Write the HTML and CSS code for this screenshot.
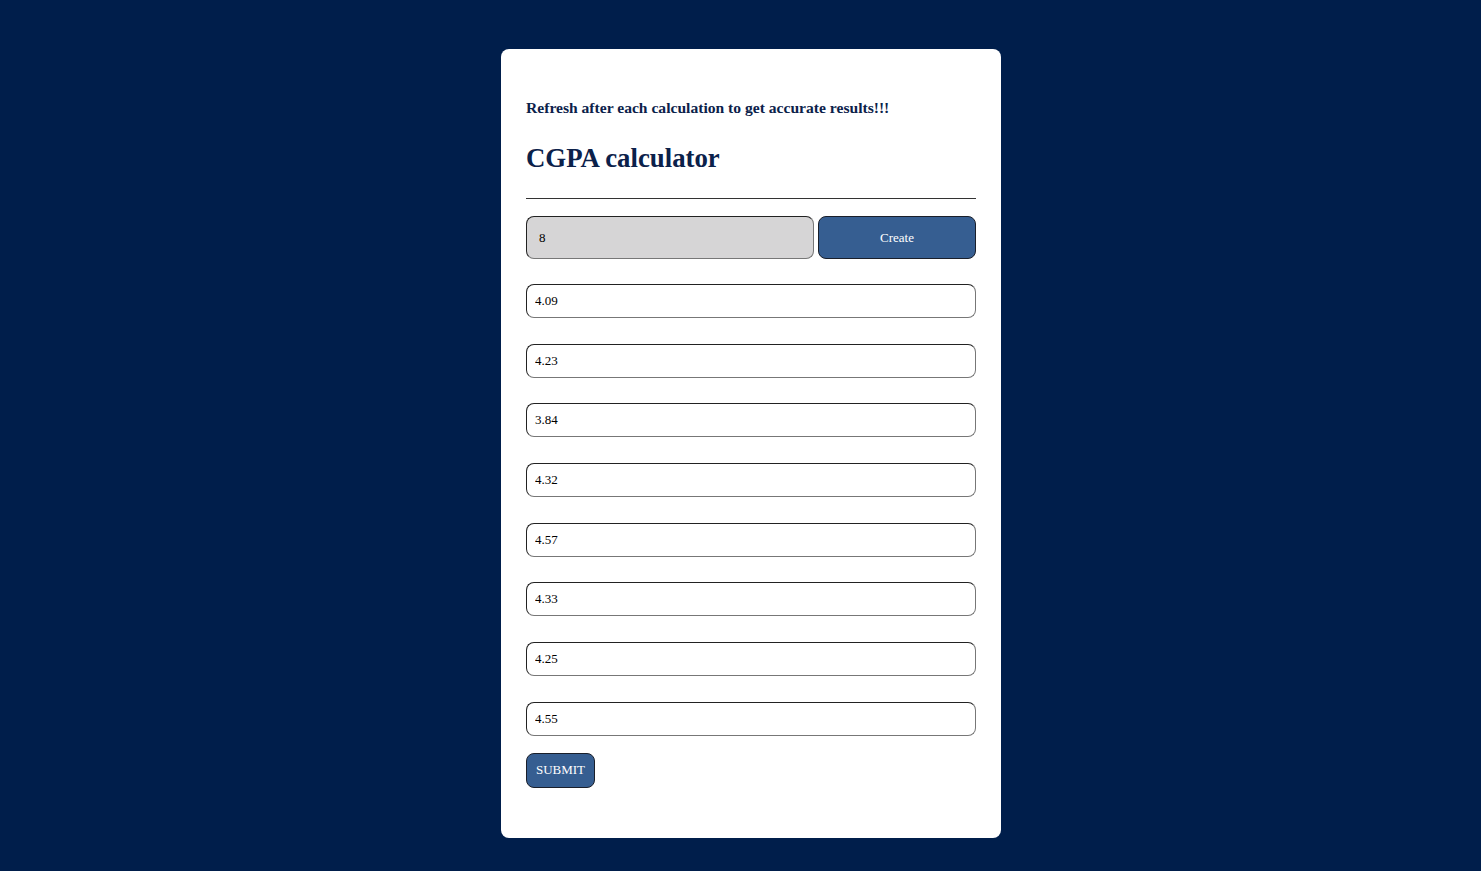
FILE: index.html
```html
<!DOCTYPE html>
<html lang="en">
<head>
<meta charset="utf-8">
<title>CGPA calculator</title>
<link rel="stylesheet" href="styles.css">
</head>
<body>
<main class="card">
  <p class="note">Refresh after each calculation to get accurate results!!!</p>
  <h1 class="title">CGPA calculator</h1>
  <hr class="rule">
  <div class="count-row">
    <input class="count" type="text" value="8">
    <button class="create" type="button">Create</button>
  </div>
  <div class="list">
    <input class="gpa" type="text" value="4.09">
    <input class="gpa" type="text" value="4.23">
    <input class="gpa" type="text" value="3.84">
    <input class="gpa" type="text" value="4.32">
    <input class="gpa" type="text" value="4.57">
    <input class="gpa" type="text" value="4.33">
    <input class="gpa" type="text" value="4.25">
    <input class="gpa" type="text" value="4.55">
  </div>
  <button class="submit" type="button">SUBMIT</button>
</main>
</body>
</html>
```
FILE: styles.css
```css
html, body {
  margin: 0;
  padding: 0;
}
body {
  background: #001e4b;
  font-family: "Liberation Serif", "Times New Roman", serif;
  padding: 49px 0 0 21px;
  min-height: 871px;
  box-sizing: border-box;
}
.card {
  width: 500px;
  height: 789px;
  box-sizing: border-box;
  margin: 0 auto;
  background: #ffffff;
  border-radius: 8px;
  padding: 50px 25px 0 25px;
  display: flex;
  flex-direction: column;
}
.note {
  margin: 0 0 26px 0;
  font-size: 15.6px;
  font-weight: bold;
  line-height: 18px;
  color: #0b214a;
}
.title {
  margin: 0;
  font-size: 26.8px;
  line-height: 30px;
  font-weight: bold;
  color: #0b214a;
}
.rule {
  margin: 25px 0 0 0;
  border: 0;
  border-top: 1px solid #333333;
  height: 0;
}
.count-row {
  margin-top: 17px;
  display: flex;
  gap: 4px;
  height: 43px;
}
.count {
  flex: 0 0 288px;
  box-sizing: border-box;
  height: 43px;
  background: #d6d5d6;
  border: 1px solid #777777;
  border-top-color: #222222;
  border-left-color: #222222;
  border-radius: 8px;
  padding: 0 12px;
  font-family: "Liberation Serif", "Times New Roman", serif;
  font-size: 13px;
  color: #000;
}
.create {
  flex: 1;
  box-sizing: border-box;
  height: 43px;
  background: #365e91;
  border: 1px solid #1a1f2a;
  border-radius: 8px;
  color: #ffffff;
  font-family: "Liberation Serif", "Times New Roman", serif;
  font-size: 13px;
}
.list {
  margin-top: 25px;
  display: flex;
  flex-direction: column;
  gap: 25.7px;
}
.gpa {
  box-sizing: border-box;
  width: 450px;
  height: 34px;
  background: #ffffff;
  border: 1px solid #777777;
  border-top-color: #222222;
  border-left-color: #222222;
  border-radius: 8px;
  padding: 0 8px;
  font-family: "Liberation Serif", "Times New Roman", serif;
  font-size: 13px;
  color: #000;
}
.submit {
  margin-top: 17px;
  align-self: flex-start;
  box-sizing: border-box;
  width: 69px;
  height: 35px;
  padding: 0;
  background: #365e91;
  border: 1px solid #1a1f2a;
  border-radius: 8px;
  color: #ffffff;
  font-family: "Liberation Serif", "Times New Roman", serif;
  font-size: 13px;
}
```
